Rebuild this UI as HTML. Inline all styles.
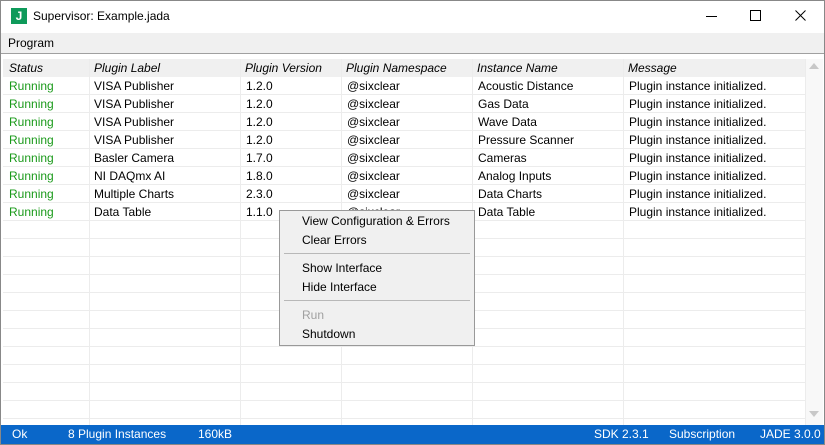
<!DOCTYPE html><html><head><style>
body{margin:0;width:825px;height:445px;overflow:hidden;font-family:"Liberation Sans",sans-serif;font-size:12px;color:#000;background:#fff;position:relative}
.a{position:absolute}
.row{position:absolute;left:3px;width:802px;height:18px;border-bottom:1px solid #ececec;box-sizing:border-box}
.c{position:absolute;top:2px;white-space:nowrap}
.vl{position:absolute;top:59px;height:366px;width:1px;background:#ececec}
.mi{position:absolute;left:22px;white-space:nowrap}
</style></head><body>
<div class="a" style="left:0;top:0;width:823px;height:443px;border:1px solid #888"></div>
<div class="a" style="left:11px;top:8px;width:16px;height:16px;background:#0e9a5a;color:#fff;font-weight:bold;font-size:12px;line-height:16px;text-align:center">J</div>
<div class="a" style="left:33px;top:9px;font-size:12px">Supervisor: Example.jada</div>
<div class="a" style="left:706px;top:16px;width:11px;height:1px;background:#000"></div>
<div class="a" style="left:750px;top:10px;width:9px;height:9px;border:1px solid #000"></div>
<svg class="a" style="left:795px;top:10px" width="11" height="11"><path d="M0.5 0.5L10.5 10.5M10.5 0.5L0.5 10.5" stroke="#000" stroke-width="1"/></svg>
<div class="a" style="left:1px;top:33px;width:823px;height:20px;background:#f0f0f0;border-bottom:1px solid #a0a0a0"></div>
<div class="a" style="left:8px;top:36px">Program</div>
<div class="a" style="left:3px;top:59px;width:802px;height:18px;background:#f0f0f0"></div>
<div class="vl" style="left:89px"></div><div class="vl" style="left:240px"></div><div class="vl" style="left:341px"></div><div class="vl" style="left:472px"></div><div class="vl" style="left:623px"></div><div class="vl" style="left:805px"></div>
<div class="a" style="left:806px;top:59px;width:17px;height:366px;background:#f8f8f8"></div>
<div class="a" style="left:809px;top:63px;border:5px solid transparent;border-bottom:6px solid #c8c8c8;border-top:0"></div>
<div class="a" style="left:809px;top:411px;border:5px solid transparent;border-top:6px solid #c8c8c8;border-bottom:0"></div>
<div id="t"></div>
<div class="a" style="left:1px;top:425px;width:823px;height:19px;background:#0a67c9;color:#fff">
<span class="a" style="left:11px;top:2px">Ok</span><span class="a" style="left:67px;top:2px">8 Plugin Instances</span><span class="a" style="left:197px;top:2px">160kB</span><span class="a" style="left:593px;top:2px">SDK 2.3.1</span><span class="a" style="left:668px;top:2px">Subscription</span><span class="a" style="left:759px;top:2px">JADE 3.0.0</span></div>
<div class="a" style="left:279px;top:210px;width:194px;height:134px;background:#f0f0f0;border:1px solid #999">
<div class="mi" style="top:3px">View Configuration &amp; Errors</div>
<div class="mi" style="top:22px">Clear Errors</div>
<div class="a" style="left:4px;top:42px;width:186px;height:1px;background:#b8b8b8"></div>
<div class="mi" style="top:50px">Show Interface</div>
<div class="mi" style="top:69px">Hide Interface</div>
<div class="a" style="left:4px;top:89px;width:186px;height:1px;background:#b8b8b8"></div>
<div class="mi" style="top:97px;color:#a0a0a0">Run</div>
<div class="mi" style="top:116px">Shutdown</div>
</div>
<script>
var d=[["VISA Publisher","1.2.0","Acoustic Distance"],["VISA Publisher","1.2.0","Gas Data"],["VISA Publisher","1.2.0","Wave Data"],["VISA Publisher","1.2.0","Pressure Scanner"],["Basler Camera","1.7.0","Cameras"],["NI DAQmx AI","1.8.0","Analog Inputs"],["Multiple Charts","2.3.0","Data Charts"],["Data Table","1.1.0","Data Table"]];
var h='<div class="row" style="top:59px;border:0"><i class="c" style="left:6px">Status</i><i class="c" style="left:91px">Plugin Label</i><i class="c" style="left:242px">Plugin Version</i><i class="c" style="left:343px">Plugin Namespace</i><i class="c" style="left:474px">Instance Name</i><i class="c" style="left:625px">Message</i></div>';
for(var i=0;i<19;i++){var y=77+i*18;var r=d[i];h+='<div class="row" style="top:'+y+'px">';if(r){h+='<span class="c" style="left:6px;color:#1a9a1a">Running</span><span class="c" style="left:91px">'+r[0]+'</span><span class="c" style="left:243px">'+r[1]+'</span><span class="c" style="left:344px">@sixclear</span><span class="c" style="left:475px">'+r[2]+'</span><span class="c" style="left:626px">Plugin instance initialized.</span>';}h+='</div>';}
document.getElementById('t').innerHTML=h;
</script>
</body></html>
